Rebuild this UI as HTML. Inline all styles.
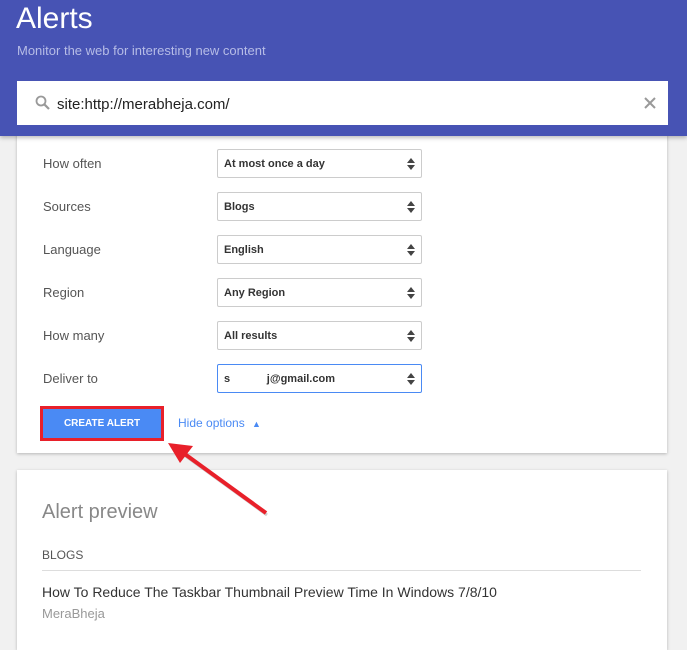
<!DOCTYPE html>
<html><head><style>
*{margin:0;padding:0;box-sizing:border-box}
body{width:687px;height:637px;overflow:hidden;background:#f1f1f1;font-family:"Liberation Sans",sans-serif;position:relative}
.hdr{position:absolute;left:0;top:0;width:687px;height:136px;background:#4753b4;box-shadow:0 2px 4px rgba(0,0,0,.25);z-index:2}
.hdr h1{position:absolute;left:16px;top:2px;font-weight:normal;font-size:30px;color:#fff}
.hdr .sub{position:absolute;left:17px;top:43px;font-size:13px;color:#b6bce6}
.search{position:absolute;left:17px;top:81px;width:651px;height:44px;background:#fff}
.search .t{position:absolute;left:40px;top:15px;font-size:15px;color:#222}
.card{position:absolute;left:17px;width:650px;background:#fff;box-shadow:0 1px 3px rgba(0,0,0,.25)}
.lab{position:absolute;left:26px;font-size:13px;color:#555}
.sel{position:absolute;left:200px;width:205px;height:29px;border:1px solid #ccc;border-radius:2px;font-size:11px;font-weight:bold;color:#333;padding:8px 0 0 6px}
.sel:after{content:"";position:absolute;right:6px;top:8px;border:4px solid transparent;border-bottom:5px solid #444;border-top:none}
.sel:before{content:"";position:absolute;right:6px;top:15px;border:4px solid transparent;border-top:5px solid #444;border-bottom:none}
</style></head><body>
<div class="hdr">
<h1>Alerts</h1>
<div class="sub">Monitor the web for interesting new content</div>
<div class="search">
<svg style="position:absolute;left:18px;top:14px" width="15" height="15" viewBox="0 0 15 15"><circle cx="6" cy="6" r="4.5" fill="none" stroke="#999" stroke-width="1.8"/><line x1="9.3" y1="9.3" x2="14" y2="14" stroke="#999" stroke-width="2.2"/></svg>
<div class="t">site:http://merabheja.com/</div>
<svg style="position:absolute;left:627px;top:16px" width="12" height="12"><path d="M1 1L11 11M11 1L1 11" stroke="#999" stroke-width="2"/></svg>
</div>
</div>
<div class="card" style="top:130px;height:323px">
<div class="lab" style="top:26px">How often</div><div class="sel" style="top:19px">At most once a day</div>
<div class="lab" style="top:69px">Sources</div><div class="sel" style="top:62px">Blogs</div>
<div class="lab" style="top:112px">Language</div><div class="sel" style="top:105px">English</div>
<div class="lab" style="top:155px">Region</div><div class="sel" style="top:148px">Any Region</div>
<div class="lab" style="top:198px">How many</div><div class="sel" style="top:191px">All results</div>
<div class="lab" style="top:241px">Deliver to</div><div class="sel" style="top:234px;border-color:#4a8af4">s&nbsp;&nbsp;&nbsp;&nbsp;&nbsp;&nbsp;&nbsp;&nbsp;&nbsp;&nbsp;&nbsp;&nbsp;j@gmail.com</div>
<div style="position:absolute;left:23px;top:276px;width:124px;height:35px;border:3px solid #e8202a;background:#4a8af4;color:#fff;font-size:10px;font-weight:bold;text-align:center;line-height:29px">CREATE ALERT</div>
<div style="position:absolute;left:161px;top:286px;font-size:12px;color:#4a8af4">Hide options <span style="font-size:9px;margin-left:4px">&#9650;</span></div>
</div>
<div class="card" style="top:470px;height:180px">
<div style="position:absolute;left:25px;top:31px;font-size:20px;color:#888">Alert preview</div>
<div style="position:absolute;left:25px;top:78px;font-size:12px;color:#555">BLOGS</div>
<div style="position:absolute;left:25px;top:100px;width:599px;height:1px;background:#ddd"></div>
<div style="position:absolute;left:25px;top:114px;font-size:14px;color:#333">How To Reduce The Taskbar Thumbnail Preview Time In Windows 7/8/10</div>
<div style="position:absolute;left:25px;top:136px;font-size:13px;color:#999">MeraBheja</div>
</div>
<svg style="position:absolute;left:0;top:0;z-index:3" width="687" height="637"><line x1="266" y1="513" x2="182" y2="452" stroke="#888" stroke-opacity=".4" stroke-width="3" transform="translate(1,2)"/><line x1="266" y1="513" x2="182" y2="452" stroke="#e8202a" stroke-width="4"/><polygon points="168,443 193,446 180,463" fill="#e8202a"/></svg>
</body></html>
